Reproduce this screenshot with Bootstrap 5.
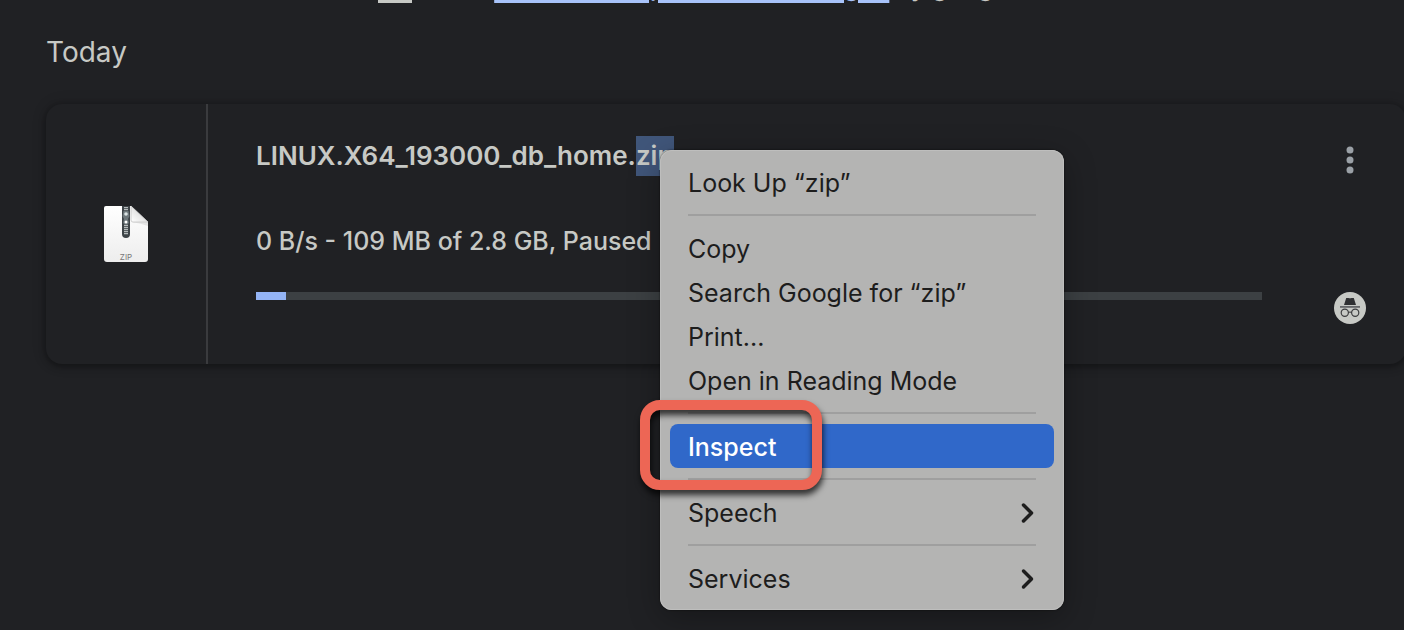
<!DOCTYPE html>
<html lang="en" data-bs-theme="dark">
<head>
<meta charset="utf-8">
<meta name="viewport" content="width=device-width, initial-scale=1">
<title>Downloads</title>
<link href="https://cdn.jsdelivr.net/npm/bootstrap@5.3.0/dist/css/bootstrap.min.css" rel="stylesheet">
<style>
  body { background: #202124; color: #c7c9c5; font-family: Inter, "Liberation Sans", sans-serif; font-size: 25px; line-height: 40px; min-height: 100vh; overflow: hidden; }
  .managed-note { height: 3px; line-height: 32px; padding-left: 44px; font-weight: 500; }
  .managed-note a { color: #a8c3fa; text-decoration-thickness: 3px; text-underline-offset: 4px; }
  .day-title { color: inherit; font-size: 28px; font-weight: 400; line-height: 40px; margin: 29px 0 32px 46px; }
  .download-card { margin: 0 -2px 0 46px; height: 260px; border-radius: 16px; box-shadow: 0 2px 6px 1px rgba(0,0,0,.32), 0 0 16px rgba(0,0,0,.12); }
  .file-cell { width: 162px; border-right: 2px solid #3a3b3e; }
  .details { padding: 32px 72px 0 48px; }
  .file-name { color: inherit; font-size: 26px; font-weight: 600; line-height: 40px; margin: 0; }
  .file-name .picked { background: #40567a; display: inline-block; }
  .status-line { font-weight: 500; margin: 45px 0 31px; }
  .download-bar { height: 8px; border-radius: 0; background: #3c4043; }
  .download-bar .progress-bar { background: #94b4f5; }
  .side { padding: 40px 40px 40px 0; }
  .more-btn { width: 32px; height: 32px; }
  .context-menu { left: 660px; top: 150px; width: 404px; padding: 10px; border-radius: 12px; background: #b4b4b3; box-shadow: inset 0 0 0 1px #bebebd, 0 0 2px rgba(0,0,0,.7), 0 8px 32px rgba(0,0,0,.3); }
  .context-menu button { font-size: 25px; line-height: 42px; padding: 2px 18px 0; border: 0; border-radius: 8px; background: none; color: #1d1d1d; text-align: left; }
  .context-menu button.active { background: #3068c9; color: #fff; font-weight: 500; }
  .context-menu hr { margin: 10px 18px; border-top: 2px solid #9f9f9f; opacity: 1; }
  .callout-ring { left: 640px; top: 400px; width: 182px; height: 90px; border: 10px solid #ed6655; border-radius: 20px; pointer-events: none; filter: drop-shadow(1px 5px 3px rgba(0,0,0,.75)); }
</style>
</head>
<body>
<div class="managed-note d-flex justify-content-center align-items-end overflow-hidden">
  <svg class="flex-shrink-0 me-3" width="42" height="36" viewBox="0 0 42 36" aria-hidden="true"><path d="M4 4h17v8h17v24H4z" fill="#c7c9c5"/></svg>
  <div class="text-nowrap">Your <a href="#">browser and profile are managed</a> by google.com</div>
</div>

<main>
  <h2 class="day-title">Today</h2>
  <article class="download-card d-flex">
    <div class="file-cell flex-shrink-0 d-flex align-items-center justify-content-center">
      <svg width="48" height="60" viewBox="0 0 48 60" role="img" aria-label="ZIP file">
        <defs>
          <linearGradient id="paper" x1="0" y1="0" x2="0" y2="1"><stop offset="0" stop-color="#fff"/><stop offset="1" stop-color="#ededed"/></linearGradient>
          <linearGradient id="fold" x1="0" y1="1" x2="1" y2="0"><stop offset="0" stop-color="#fff"/><stop offset=".5" stop-color="#e4e4e4"/></linearGradient>
        </defs>
        <path d="M4 2h25l17 16v37q0 3-3 3H5q-3 0-3-3V4q0-2 2-2z" fill="url(#paper)"/>
        <path d="M29 18l17 0v4q-8-3-17-4z" fill="#d6d6d6" opacity=".6"/>
        <path d="M29 2l17 16H31q-2 0-2-2z" fill="url(#fold)" stroke="#c4c4c4" stroke-width=".8"/>
        <path d="M20 2h8v28q0 4-4 4t-4-4z" fill="#3d4347"/>
        <path d="M24 3v28" stroke="#b5babb" stroke-width="4" stroke-dasharray="1.2 .8"/>
        <path d="M21.500 7h5l1 5-1.500 3 1 4q-3 3-6 0l1-4-1.500-3z" fill="#6d777b"/>
        <circle cx="24" cy="10" r="1.800" fill="#dbe3e4"/><circle cx="24" cy="18" r="1.500" fill="#fff"/>
        <text x="24" y="56" text-anchor="middle" font-size="8" fill="#777">ZIP</text>
      </svg>
    </div>
    <div class="details flex-grow-1">
      <h3 class="file-name text-nowrap">LINUX.X64_193000_db_home.<span class="picked">zip</span></h3>
      <p class="status-line text-nowrap">0 B/s - 109 MB of 2.8 GB, Paused</p>
      <div class="progress download-bar" role="progressbar" aria-label="Download progress" aria-valuenow="3" aria-valuemin="0" aria-valuemax="100">
        <div class="progress-bar" style="width: 3%"></div>
      </div>
    </div>
    <div class="side d-flex flex-column justify-content-between">
      <button class="more-btn btn p-0 border-0 d-flex" type="button" aria-label="More actions">
        <svg width="32" height="32" viewBox="0 0 32 32" fill="#9aa0a6"><circle cx="16" cy="6" r="3.500"/><circle cx="16" cy="16" r="3.500"/><circle cx="16" cy="26" r="3.500"/></svg>
      </button>
      <svg width="32" height="32" viewBox="0 0 32 32" role="img" aria-label="Incognito download">
        <circle cx="16" cy="16" r="16" fill="#c7c9c5"/>
        <path d="M12.200 6h2.300q1.500.6 3 0h2.300L22 13H10z" fill="#303133"/>
        <path d="M6 14h20v1.800H6z" fill="#66686a"/>
        <g fill="none" stroke="#3c3d3f" stroke-width="1.200"><circle cx="10.800" cy="20.800" r="3.600"/><circle cx="21.200" cy="20.800" r="3.600"/><path d="M14.400 20.500q1.600-1 3.200 0"/></g>
      </svg>
    </div>
  </article>
</main>

<div class="context-menu position-absolute d-flex flex-column" role="menu">
  <button type="button" role="menuitem">Look Up “zip”</button>
  <hr>
  <button type="button" role="menuitem">Copy</button>
  <button type="button" role="menuitem">Search Google for “zip”</button>
  <button type="button" role="menuitem">Print...</button>
  <button type="button" role="menuitem">Open in Reading Mode</button>
  <hr>
  <button class="active" type="button" role="menuitem">Inspect</button>
  <hr>
  <button class="d-flex align-items-center justify-content-between" type="button" role="menuitem">Speech
    <svg width="16" height="22" viewBox="0 0 16 22" fill="none" stroke="#1d1d1d" stroke-width="3.500" stroke-linecap="round" stroke-linejoin="round"><path d="M3.500 3l8 8-8 8"/></svg></button>
  <hr>
  <button class="d-flex align-items-center justify-content-between" type="button" role="menuitem">Services
    <svg width="16" height="22" viewBox="0 0 16 22" fill="none" stroke="#1d1d1d" stroke-width="3.500" stroke-linecap="round" stroke-linejoin="round"><path d="M3.500 3l8 8-8 8"/></svg></button>
</div>
<div class="callout-ring position-absolute"></div>
<script src="https://cdn.jsdelivr.net/npm/bootstrap@5.3.0/dist/js/bootstrap.bundle.min.js"></script>
</body>
</html>
